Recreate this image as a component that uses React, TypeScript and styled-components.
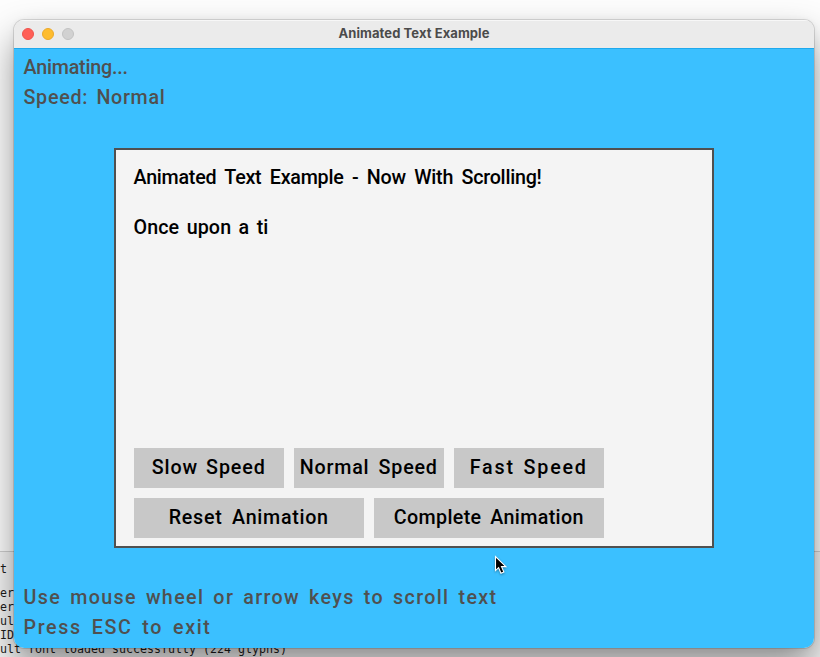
import React from "react";
import styled, { createGlobalStyle } from "styled-components";

const GlobalStyle = createGlobalStyle`
  * { box-sizing: border-box; }
  html, body { margin: 0; padding: 0; }
  body { overflow: hidden; }
`;

const Desktop = styled.div`
  position: relative;
  width: 820px;
  height: 657px;
  overflow: hidden;
  display: grid;
  grid-template-rows: 551px 106px;
  background: #fdfdfd;
`;

const Editor = styled.div`
  background: #fdfdfd;
`;

const Terminal = styled.div`
  border-top: 1px solid #cfcfcf;
  background: #f4f4f4;
  padding-top: 10px;
  font: 11.63px/14px "DejaVu Sans Mono", monospace;
  color: #1c1c1c;
`;

const TerminalLine = styled.div<{ $gap?: number }>`
  height: 14px;
  margin-bottom: ${(p) => p.$gap ?? 0}px;
  white-space: pre;
`;

const Window = styled.section`
  position: absolute;
  left: 14px;
  top: 20px;
  width: 800px;
  height: 628px;
  display: flex;
  flex-direction: column;
  border-radius: 10px;
  overflow: hidden;
  box-shadow:
    0 0 0 1px rgba(0, 0, 0, 0.12),
    0 0 6px rgba(0, 0, 0, 0.06),
    0 18px 36px rgba(0, 0, 0, 0.42);
`;

const TitleBar = styled.header`
  height: 28px;
  flex: none;
  display: grid;
  grid-template-columns: 68px 1fr 68px;
  align-items: center;
  background: #ebebeb;
  box-shadow: inset 0 1px #f7f7f7;
`;

const Lights = styled.div`
  display: flex;
  gap: 8px;
  padding-left: 8px;
`;

const Light = styled.span<{ $fill: string; $edge: string }>`
  width: 12px;
  height: 12px;
  border-radius: 50%;
  background: ${(p) => p.$fill};
  border: 1px solid ${(p) => p.$edge};
`;

const Title = styled.h1`
  margin: 0;
  padding-bottom: 2px;
  text-align: center;
  font: 700 13px/16px Inter, sans-serif;
  letter-spacing: 0.08px;
  color: #4b4b4b;
`;

const Canvas = styled.main`
  flex: 1;
  display: flex;
  flex-direction: column;
  padding: 9px 10px 0;
  border-top: 1px solid #1fa9ed;
  background: #3bc0ff;
`;

const GameText = styled.div<{ $width: number; $spacing?: number; $muted?: boolean }>`
  width: ${(p) => p.$width}px;
  height: 20px;
  margin-left: -0.5px;
  font: 500 19.7px/20px Roboto, sans-serif;
  letter-spacing: ${(p) => p.$spacing ?? 0}px;
  white-space: nowrap;
  text-align: justify;
  text-align-last: justify;
  color: ${(p) => (p.$muted ? "#505050" : "#000")};
`;

const Lines = styled.div`
  display: flex;
  flex-direction: column;
  gap: 10px;
`;

const Panel = styled.section`
  width: 600px;
  height: 400px;
  margin: 40px 0 40px 90px;
  padding: 18px 18px 8px;
  display: flex;
  flex-direction: column;
  gap: 30px;
  border: 2px solid #505050;
  background: #f4f4f4;
`;

const Controls = styled.div`
  margin-top: auto;
  display: flex;
  flex-direction: column;
  gap: 10px;
`;

const ButtonRow = styled.div`
  display: flex;
  gap: 10px;
`;

const Button = styled.button<{ $wide?: boolean }>`
  width: ${(p) => (p.$wide ? 230 : 150)}px;
  height: 40px;
  display: flex;
  align-items: center;
  justify-content: center;
  padding: 0 0 1px;
  border: 0;
  border-radius: 0;
  background: #c8c8c8;
`;

const Pointer = styled.svg`
  position: absolute;
  left: 493px;
  top: 554px;
  filter: drop-shadow(0 1px 1px rgba(0, 0, 0, 0.35));
`;

const speeds = [
  { label: "Slow Speed", width: 114, spacing: 0.9 },
  { label: "Normal Speed", width: 138, spacing: 0.8 },
  { label: "Fast Speed", width: 118, spacing: 1.8 },
];

const actions = [
  { label: "Reset Animation", width: 160, spacing: 0.7 },
  { label: "Complete Animation", width: 190, spacing: 0.35 },
];

export default function App() {
  return (
    <>
      <GlobalStyle />
      <Desktop>
        <Editor />
        <Terminal>
          <TerminalLine $gap={10}>t</TerminalLine>
          <TerminalLine>er</TerminalLine>
          <TerminalLine>er</TerminalLine>
          <TerminalLine>ul</TerminalLine>
          <TerminalLine>ID</TerminalLine>
          <TerminalLine>ult font loaded successfully (224 glyphs)</TerminalLine>
        </Terminal>

        <Window>
          <TitleBar>
            <Lights>
              <Light $fill="#ff5f57" $edge="#ee544c" />
              <Light $fill="#febc2e" $edge="#eba92a" />
              <Light $fill="#d1d1d1" $edge="#c2c2c2" />
            </Lights>
            <Title>Animated Text Example</Title>
          </TitleBar>
          <Canvas>
            <Lines>
              <GameText $muted $width={104} $spacing={-0.2}>Animating...</GameText>
              <GameText $muted $width={142} $spacing={0.7}>Speed: Normal</GameText>
            </Lines>
            <Panel>
              <GameText $width={408} $spacing={-0.25}>
                Animated Text Example - Now With Scrolling!
              </GameText>
              <GameText $width={135} $spacing={0.1}>Once upon a ti</GameText>
              <Controls>
                <ButtonRow>
                  {speeds.map((s) => (
                    <Button key={s.label}>
                      <GameText as="span" $width={s.width} $spacing={s.spacing}>{s.label}</GameText>
                    </Button>
                  ))}
                </ButtonRow>
                <ButtonRow>
                  {actions.map((a) => (
                    <Button key={a.label} $wide>
                      <GameText as="span" $width={a.width} $spacing={a.spacing}>{a.label}</GameText>
                    </Button>
                  ))}
                </ButtonRow>
              </Controls>
            </Panel>
            <Lines>
              <GameText $muted $width={474} $spacing={1.35}>
                Use mouse wheel or arrow keys to scroll text
              </GameText>
              <GameText $muted $width={188} $spacing={1.6}>Press ESC to exit</GameText>
            </Lines>
          </Canvas>
        </Window>

        <Pointer width="16" height="22" viewBox="0 0 16 22">
          <path
            d="M2.5 2.5V16.6L5.6 13.7L8 19.2L10.9 18L8.5 12.6H12.9Z"
            fill="#000"
            stroke="#fff"
            strokeWidth="1.1"
          />
        </Pointer>
      </Desktop>
    </>
  );
}
